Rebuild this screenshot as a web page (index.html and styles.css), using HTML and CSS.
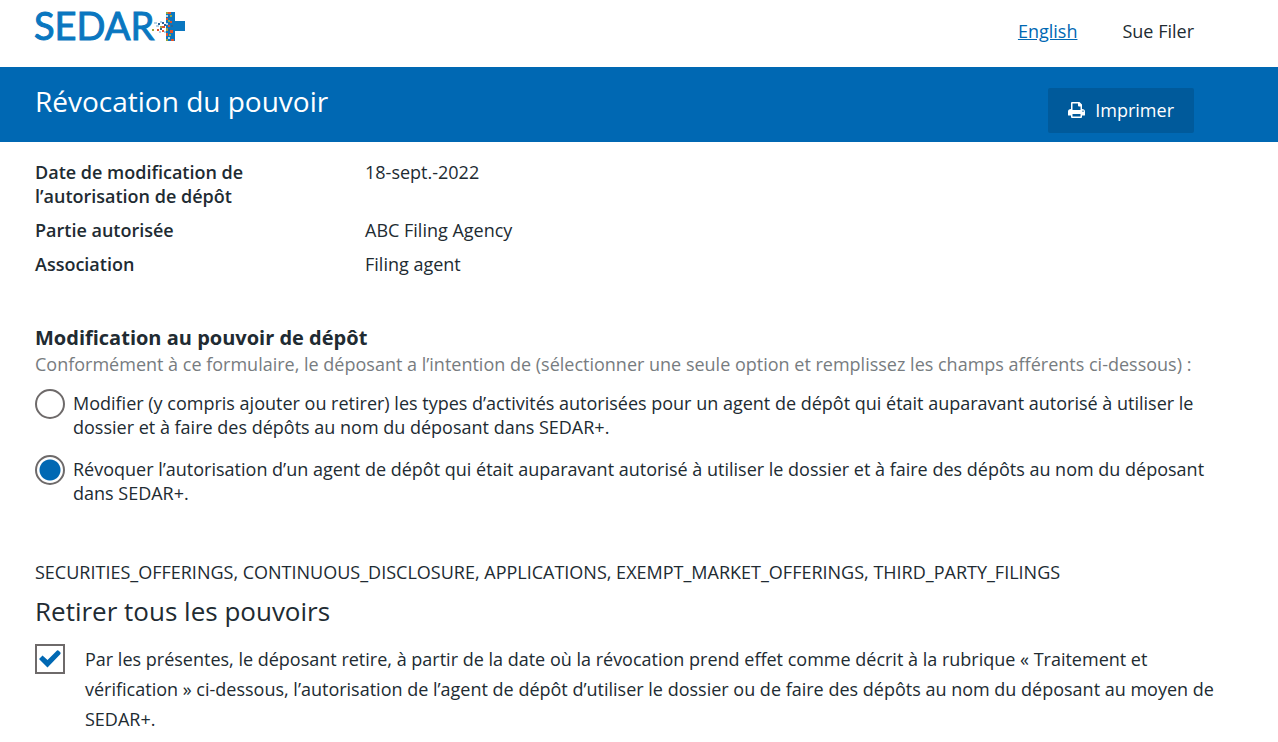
FILE: index.html
```
<!DOCTYPE html>
<html lang="fr">
<head>
    <meta charset="UTF-8">
    <meta name="viewport" content="width=device-width, initial-scale=1">
    <title>Révocation du pouvoir</title>
    <link rel="stylesheet" href="styles.css">
</head>
<body>
    <header class="header">
        <svg class="logo" width="151" height="32" viewBox="0 0 151 32" role="img" aria-label="SEDAR+">
            <text class="logo-text" x="-1" y="29">SEDAR</text>
            <!-- plus sign -->
            <path fill="#0a77c0" d="M131 1h9v9h10v10h-10v10h-9z"/>
            <!-- mosaic -->
            <path fill="#e0522d" d="M133 1h3v2h-3zM131 7h2v2h-2zM135 10h2v2h-2zM127 15h3v2h-3zM133 14h2v2h-2zM122 18h2v2h-2zM135 19h3v3h-3zM131 22h2v3h-2zM136 28h3v2h-3zM127 19h2v2h-2z"/>
            <path fill="#9aa63f" d="M131 1h2v2h-2zM135 4h2v2h-2zM133 9h2v2h-2zM125 15h2v2h-2zM117 18h2v2h-2zM131 17h2v3h-2zM134 23h2v2h-2zM131 28h2v2h-2z"/>
            <path fill="#2b6495" d="M133 5h2v2h-2zM123 12h2v2h-2zM127 11h2v2h-2zM136 14h2v2h-2zM125 17h2v2h-2zM133 18h2v2h-2zM129 13h2v2h-2z"/>
            <path fill="#b5d4e6" d="M131 4h2v2h-2zM119 11h3v2h-3zM125 10h2v2h-2zM121 14h3v2h-3zM131 12h2v2h-2zM129 20h2v2h-2zM124 20h2v2h-2zM133 26h2v2h-2z"/>
        </svg>
        <nav class="user-nav">
            <a href="#">English</a>
            <span>Sue Filer</span>
        </nav>
    </header>

    <div class="banner">
        <h1>Révocation du pouvoir</h1>
        <button type="button" class="btn-print">
            <svg width="17" height="16" viewBox="0 0 17 16" aria-hidden="true">
                <path fill="#fff" fill-rule="evenodd" d="M3 7V1q0-1 1-1h7.500L14 2.500V7q3 0 3 2.500V13q0 .5-.5.500H14V15q0 1-1 1H4q-1 0-1-1v-1.500H.5Q0 13.500 0 13V9.500Q0 7 3 7zM4.500 1.500V8h8V4.500H11q-1 0-1-1v-2zM4.500 12v2.500h8V12zM14.500 8.500v1.500h1v-1.500z"/>
            </svg>
            Imprimer
        </button>
    </div>

    <main class="content">
        <dl class="details">
            <dt>Date de modification de l’autorisation de dépôt</dt>
            <dd>18-sept.-2022</dd>
            <dt>Partie autorisée</dt>
            <dd>ABC Filing Agency</dd>
            <dt>Association</dt>
            <dd>Filing agent</dd>
        </dl>

        <fieldset class="options">
            <legend>Modification au pouvoir de dépôt</legend>
            <p class="hint">Conformément à ce formulaire, le déposant a l’intention de (sélectionner une seule option et remplissez les champs afférents ci-dessous) :</p>
            <div class="option">
                <input type="radio" name="modification" id="modifier">
                <label for="modifier">Modifier (y compris ajouter ou retirer) les types d’activités autorisées pour un agent de dépôt qui était auparavant autorisé à utiliser le dossier et à faire des dépôts au nom du déposant dans SEDAR+.</label>
            </div>
            <div class="option">
                <input type="radio" name="modification" id="revoquer" checked>
                <label for="revoquer">Révoquer l’autorisation d’un agent de dépôt qui était auparavant autorisé à utiliser le dossier et à faire des dépôts au nom du déposant dans SEDAR+.</label>
            </div>
        </fieldset>

        <p class="activities">SECURITIES_OFFERINGS, CONTINUOUS_DISCLOSURE, APPLICATIONS, EXEMPT_MARKET_OFFERINGS, THIRD_PARTY_FILINGS</p>

        <h2>Retirer tous les pouvoirs</h2>
        <div class="confirm">
            <span class="checkbox">
                <input type="checkbox" id="retirer" checked>
                <svg width="22" height="18" viewBox="0 0 22 18" aria-hidden="true">
                    <path fill="#0068b3" d="M0 9 3.500 5.500 8.500 10 18 0.500Q19 0 20 1L21.500 2.500Q22 3.500 21 4.500L8.500 17.500z"/>
                </svg>
            </span>
            <label for="retirer">Par les présentes, le déposant retire, à partir de la date où la révocation prend effet comme décrit à la rubrique « Traitement et vérification » ci-dessous, l’autorisation de l’agent de dépôt d’utiliser le dossier ou de faire des dépôts au nom du déposant au moyen de SEDAR+.</label>
        </div>
    </main>
</body>
</html>
```
FILE: styles.css
```
*{
    box-sizing: border-box;
    padding: 0;
    margin: 0;
}

body{
    font-family: "Open Sans", "Noto Sans", sans-serif;
    font-size: 18px;
    line-height: 24px;
    color: #212b32;
    background: #fff;
}

.header{
    display: flex;
    justify-content: space-between;
    align-items: flex-start;
    height: 67px;
    padding: 11px 84px 0 35px;
}

.logo{
    overflow: visible;
}

.logo-text{
    font-family: Lato, sans-serif;
    font-size: 38px;
    fill: #0a77c0;
    stroke: #0a77c0;
    stroke-width: 1px;
}

.user-nav{
    display: flex;
    gap: 45px;
    padding-top: 8px;
}

.user-nav a{
    color: #0068b3;
}

.banner{
    display: flex;
    justify-content: space-between;
    align-items: flex-start;
    height: 75px;
    padding: 14px 84px 0 35px;
    background: #0068b3;
    color: #fff;
}

.banner h1{
    font-size: 28px;
    line-height: 40px;
    font-weight: 400;
}

.btn-print{
    display: flex;
    align-items: center;
    gap: 10px;
    height: 45px;
    margin-top: 7px;
    padding: 0 20px 2px;
    border: 0;
    border-radius: 2px;
    background: #005a9b;
    color: #fff;
    font: inherit;
    font-weight: 500;
    cursor: pointer;
}

.content{
    padding: 18px 60px 7px 35px;
}

.details{
    display: grid;
    grid-template-columns: 240px 1fr;
    column-gap: 90px;
    row-gap: 10px;
}

.details dt{
    font-weight: 600;
}

.options{
    margin-top: 50px;
    border: 0;
}

.options legend{
    font-size: 20px;
    font-weight: 700;
}

.hint{
    margin-top: 2px;
    color: #777c80;
}

.option{
    display: flex;
    gap: 8px;
    margin-top: 13px;
}

.option + .option{
    margin-top: 16px;
}

.option label{
    padding-top: 2px;
}

.option input,
.checkbox input{
    appearance: none;
    flex: none;
    width: 30px;
    height: 30px;
    border: 2px solid #6e6a6a;
    background: #fff;
}

.option input{
    border-radius: 50%;
}

.option input:checked{
    background: radial-gradient(circle, #0068b3 10px, #fff 11px);
}

.activities{
    margin-top: 55px;
}

.content h2{
    margin-top: 9px;
    font-size: 26px;
    line-height: 36px;
    font-weight: 400;
}

.confirm{
    display: flex;
    gap: 20px;
    margin-top: 15px;
    line-height: 30px;
}

.checkbox{
    display: grid;
    flex: none;
    width: 30px;
    height: 30px;
    place-items: center;
}

.checkbox input,
.checkbox svg{
    grid-area: 1 / 1;
}

.checkbox svg{
    pointer-events: none;
}

.checkbox input:not(:checked) + svg{
    visibility: hidden;
}
```
